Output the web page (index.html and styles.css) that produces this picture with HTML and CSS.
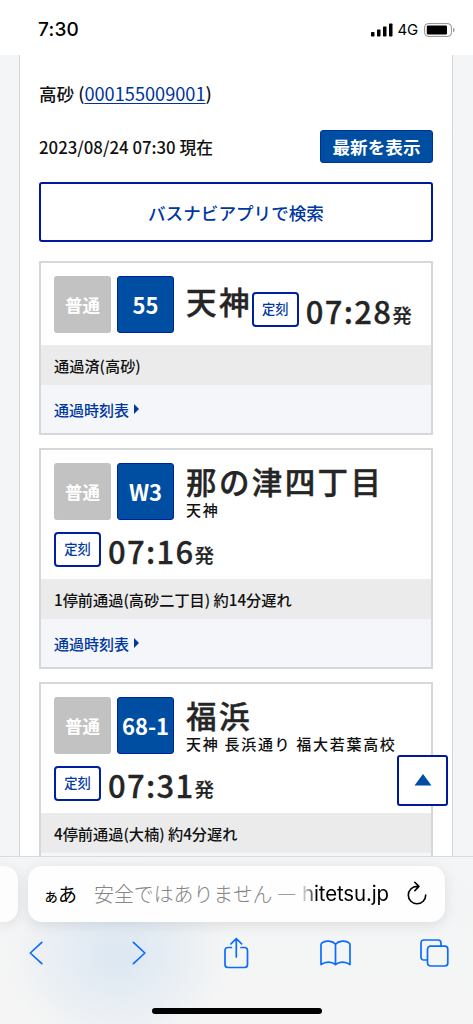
FILE: index.html
```html
<!DOCTYPE html>
<html lang="ja">
<head>
<meta charset="utf-8">
<meta name="viewport" content="width=device-width">
<title>高砂</title>
<link rel="stylesheet" href="styles.css">
</head>
<body>
<div class="phone">
  <header class="status">
    <span class="clock">7:30</span>
    <div class="indicators">
      <svg class="signal" width="22" height="14" viewBox="0 0 22 14"><rect x="0" y="9" width="3.5" height="4.5" rx=".7"/><rect x="6" y="6.5" width="3.5" height="7" rx=".7"/><rect x="12" y="3.5" width="3.5" height="10" rx=".7"/><rect x="18" y=".5" width="3.5" height="13" rx=".7"/></svg>
      <span class="network">4G</span>
      <svg class="battery" width="31" height="14" viewBox="0 0 31 14"><rect x=".6" y=".6" width="26.8" height="12.8" rx="3.5" fill="none" stroke="#8e8e8e"/><rect x="2.8" y="2.6" width="20.2" height="8.8" rx="1.2"/><path d="M29 4.8Q30.6 5.3 30.6 7T29 9.2Z" fill="#999"/></svg>
    </div>
  </header>

  <main class="page">
    <div class="sheet">
      <p class="stop">高砂 (<a class="stop-link">000155009001</a>)</p>
      <div class="now">
        <span class="now-time">2023/08/24 07:30 現在</span>
        <button class="refresh">最新を表示</button>
      </div>
      <button class="app-search">バスナビアプリで検索</button>

      <section class="bus">
        <div class="bus-head">
          <span class="tag kind">普通</span><span class="tag route">55</span>
          <div class="dest"><h2 class="dest-name">天神</h2></div>
          <div class="depart inline"><span class="ontime">定刻</span><span class="time">07:28</span><span class="suffix">発</span></div>
        </div>
        <p class="progress">通過済(高砂)</p>
        <a class="timetable">通過時刻表<i class="caret"></i></a>
      </section>

      <section class="bus">
        <div class="bus-head">
          <span class="tag kind">普通</span><span class="tag route">W3</span>
          <div class="dest"><h2 class="dest-name">那の津四丁目</h2><p class="via">天神</p></div>
          <div class="depart below"><span class="ontime">定刻</span><span class="time">07:16</span><span class="suffix">発</span></div>
        </div>
        <p class="progress">1停前通過(高砂二丁目) 約14分遅れ</p>
        <a class="timetable">通過時刻表<i class="caret"></i></a>
      </section>

      <section class="bus">
        <div class="bus-head">
          <span class="tag kind">普通</span><span class="tag route">68-1</span>
          <div class="dest"><h2 class="dest-name">福浜</h2><p class="via">天神 長浜通り 福大若葉高校</p></div>
          <div class="depart below"><span class="ontime">定刻</span><span class="time">07:31</span><span class="suffix">発</span></div>
        </div>
        <p class="progress">4停前通過(大楠) 約4分遅れ</p>
        <div class="timetable"></div>
      </section>
    </div>
    <button class="to-top"><svg width="18" height="12" viewBox="0 0 18 12"><path d="M9 0L17.5 11.5H.5Z" fill="#004ea2"/></svg></button>
  </main>

  <footer class="browser">
    <div class="tabs">
      <div class="prev-tab"></div>
      <div class="address">
        <span class="reader"><small class="reader-small">ぁ</small>あ</span>
        <span class="insecure">安全ではありません —</span>
        <span class="host">hitetsu.jp</span>
        <svg class="reload" width="22" height="26" viewBox="0 0 22 26" fill="none" stroke="#000" stroke-width="1.6" stroke-linecap="round" stroke-linejoin="round"><path d="M12 5.4H11A8.7 8.7 0 1 0 19.7 14M8.8 1.3L12.9 5.4L8.8 9.7"/></svg>
      </div>
    </div>
    <nav class="tools">
      <svg class="back" width="14" height="24" viewBox="0 0 14 24"><path d="M12.8 1.3L1.3 12L12.8 22.7"/></svg>
      <svg class="forward" width="14" height="24" viewBox="0 0 14 24"><path d="M1.4 1.3L12.9 12L1.4 22.7"/></svg>
      <svg class="share" width="25" height="32" viewBox="0 0 25 32"><path d="M7.5 10.5H4Q1 10.5 1 13.5V27.5Q1 30.5 4 30.5H20.5Q23.5 30.5 23.5 27.5V13.5Q23.5 10.5 20.5 10.5H17M12.3 20V1.7M7 6.8L12.3 1.5L17.6 6.8"/></svg>
      <svg class="book" width="31" height="26" viewBox="0 0 31 26"><path d="M15.5 4.3C12.5.6 5.5 0 2 2.8Q1 3.6 1 5V24.5C5.5 21.3 11.5 21.3 15.5 24.5C19.5 21.3 25.5 21.3 30 24.5V5Q30 3.6 29 2.8C25.5 0 18.5.6 15.5 4.3V24.5"/></svg>
      <svg class="windows" width="29" height="28" viewBox="0 0 29 28"><path d="M7 21H4Q1 21 1 18V4Q1 1 4 1H18Q21 1 21 4V7"/><rect x="7.5" y="7.2" width="20.3" height="19.8" rx="3"/></svg>
    </nav>
    <div class="home-bar"></div>
  </footer>
</div>
</body>
</html>
```
FILE: styles.css
```css
* { box-sizing: border-box; }
body { margin: 0; background: #fff; }
h2, p { margin: 0; }
button { font: inherit; padding: 0; }
.phone {
  width: 473px; height: 1024px; overflow: hidden;
  display: flex; flex-direction: column;
  font-family: "Noto Sans CJK JP", sans-serif; font-weight: 500; color: #111;
}
.status {
  height: 55px; flex: none; display: flex; justify-content: space-between;
  padding: 4px 18px 0 38px; align-items: center;
  font-family: Inter, "Liberation Sans", sans-serif; color: #000;
}
.clock { font-size: 19px; line-height: 22px; font-weight: 500; letter-spacing: .2px; }
.indicators { display: flex; align-items: center; }
.network { font-size: 15px; font-weight: 400; margin: 0 6px 0 5px; letter-spacing: -.2px; }

.page { height: 801px; flex: none; overflow: hidden; background: #f3f5f7; padding: 0 20px 0 19px; position: relative; }
.sheet { background: #fff; border: 1px solid #d4d7d9; border-width: 0 1px; padding: 25px 19px 0; height: 850px; }
.stop { font-size: 17.6px; line-height: 26px; height: 50px; white-space: nowrap; }
.stop-link { color: #0033a0; text-decoration: underline; text-decoration-thickness: 1px; text-underline-offset: 2px; font-weight: 400; font-size: 18.2px; }
.now { display: flex; justify-content: space-between; align-items: center; height: 33px; }
.now-time { font-size: 16.8px; line-height: 24px; white-space: nowrap; }
.refresh { width: 113px; height: 33px; border: 1px solid #00329b; border-radius: 3px; background: #004ea2; color: #fff; font-size: 17.6px; line-height: 30px; font-weight: 700; }
.app-search { display: block; width: 394px; height: 60px; margin: 19px 0; border: 2px solid #001899; border-radius: 3px; background: #fff; color: #0037a0; font-size: 17.6px; font-weight: 500; }

.bus { border: 2px solid #d4d8da; margin-bottom: 13px; background: #fff; }
.bus-head { display: flex; flex-wrap: wrap; align-items: flex-start; padding: 13px 0 12px 13px; }
.tag { width: 57px; height: 57px; border-radius: 3px; display: flex; align-items: center; justify-content: center; color: #fff; font-weight: 700; }
.kind { background: #c2c2c2; font-size: 17.5px; margin-right: 6px; padding-bottom: 1px; }
.route { background: #004ea2; border: 1px solid #0022a0; font-size: 22px; padding-bottom: 1px; }
.dest { margin-left: 12px; height: 57px; color: #252525; }
.dest-name { font-size: 30.5px; line-height: 36px; height: 38px; margin-top: 7px; letter-spacing: 2.4px; font-weight: 500; -webkit-text-stroke: .4px #252525; white-space: nowrap; }
.dest:has(.via) .dest-name { margin-top: 0; }
.via { font-size: 15px; line-height: 18px; letter-spacing: 1.7px; white-space: nowrap; color: #111; }
.depart { display: flex; align-items: flex-end; color: #252525; height: 35px; }
.inline { margin-top: 16px; }
.below { width: 100%; margin-top: 12px; }
.ontime { width: 47px; height: 35px; border: 2px solid #001fa0; border-radius: 4px; display: flex; align-items: center; justify-content: center; font-size: 13.3px; line-height: 20px; padding-bottom: 1px; color: #0037a0; }
.time { font-size: 31px; line-height: 33px; letter-spacing: 1.3px; margin-left: 7px; -webkit-text-stroke: .3px #252525; }
.suffix { font-size: 19.5px; line-height: 24px; font-weight: 500; -webkit-text-stroke: .2px #252525; }
.progress { height: 40px; background: #ebebeb; padding-left: 13px; font-size: 15.2px; line-height: 40px; white-space: nowrap; color: #111; }
.timetable { height: 48px; background: #f4f6f9; padding-left: 13px; font-size: 15px; display: flex; align-items: center; color: #0037a0; }
.caret { border: 5px solid transparent; border-left-color: #0037a0; border-right: 0; margin-left: 5px; }
.to-top { position: absolute; left: 397px; top: 700px; width: 51px; height: 51px; background: #fff; border: 2px solid #001899; border-radius: 3px; display: flex; align-items: center; justify-content: center; padding-bottom: 2px; }

.browser {
  height: 168px; flex: none; border-top: 1px solid #d7dadd;
  background: radial-gradient(ellipse 110px 95px at 118px 98px, #dce7f2, rgba(220,231,242,.6) 45%, rgba(220,231,242,0)), linear-gradient(#f3f5f6, #f5f5f5);
}
.tabs { display: flex; gap: 10px; padding-top: 9px; }
.prev-tab { width: 18px; height: 56px; border-radius: 0 14px 14px 0; background: #fdfdfd; box-shadow: 0 3px 14px rgba(0,0,0,.1); }
.address { width: 417px; height: 56px; border-radius: 14px; background: #fefefe; box-shadow: 0 3px 14px rgba(0,0,0,.1); display: flex; align-items: center; padding-left: 15px; white-space: nowrap; }
.reader { font-size: 19px; line-height: 28px; width: 51px; color: #000; letter-spacing: -1px; font-weight: 400; }
.reader-small { font-size: 16px; }
.insecure { font-size: 19.9px; line-height: 30px; font-weight: 300; color: #858585; width: 208px; }
.host { font-family: Inter, sans-serif; font-size: 20.4px; line-height: 28px; font-weight: 400; letter-spacing: -.1px; width: 104px; color: transparent; background: linear-gradient(90deg, #ddd, #777 9px, #000 12px); -webkit-background-clip: text; background-clip: text; }
.tools { display: flex; height: 32px; margin: 15px 0 0 29px; align-items: center; }
.tools svg { flex: none; fill: none; stroke: #0a6cff; stroke-width: 1.7; stroke-linecap: round; stroke-linejoin: round; }
.forward { margin-left: 89px; }
.share { margin-left: 78px; }
.book { margin-left: 71px; }
.windows { margin-left: 69px; }
.home-bar { width: 170px; height: 6px; border-radius: 3px; background: #000; margin: 39px auto 0; }
```
